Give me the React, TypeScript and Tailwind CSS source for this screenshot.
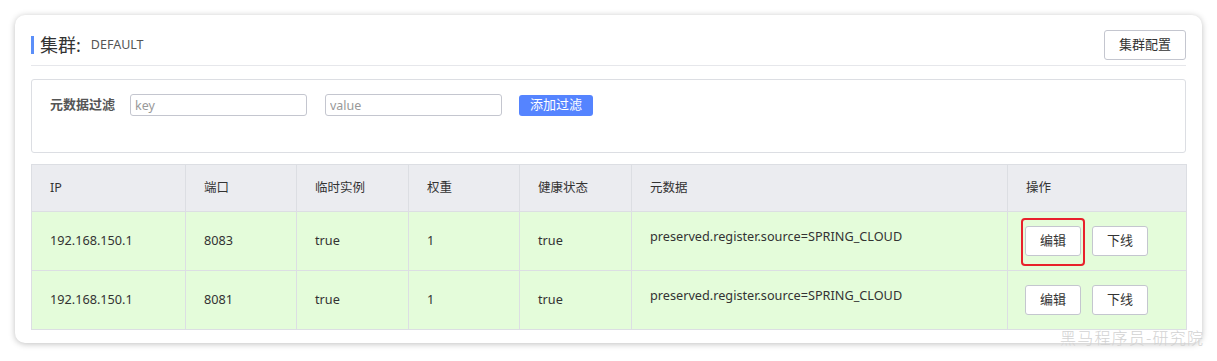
import React from 'react';

type Instance = { ip: string; port: string; ephemeral: string; weight: string; healthy: string; metadata: string };

const instances: Instance[] = [
  { ip: '192.168.150.1', port: '8083', ephemeral: 'true', weight: '1', healthy: 'true', metadata: 'preserved.register.source=SPRING_CLOUD' },
  { ip: '192.168.150.1', port: '8081', ephemeral: 'true', weight: '1', healthy: 'true', metadata: 'preserved.register.source=SPRING_CLOUD' },
];

const font = { fontFamily: '"Noto Sans", "Noto Sans CJK SC", sans-serif' };

const headers = ['IP', '端口', '临时实例', '权重', '健康状态', '元数据', '操作'];

export default function App() {
  return (
    <div className="relative w-[1217px] h-[361px] bg-white text-[#333]" style={font}>
      <div className="absolute left-[15px] top-[15px] w-[1187px] h-[328px] rounded-[10px] bg-white shadow-[0_1px_6px_rgba(0,0,0,0.25)] px-4 pt-[15px]">
        {/* header */}
        <div className="flex items-center justify-between h-[30px]">
          <div className="flex items-center">
            <div className="w-[3px] h-[18px] bg-[#5b8ff9] mr-[6px]" />
            <span className="text-[18px] leading-none text-[#333]">集群:</span>
            <span className="ml-[10px] text-[12.5px] text-[#555]">DEFAULT</span>
          </div>
          <button className="h-[30px] px-[14px] text-[13px] border border-[#c4c6cf] rounded-[3px] bg-white text-[#333]">集群配置</button>
        </div>
        <div className="mt-[5px] border-t border-[#e6e7eb]" />

        {/* filter */}
        <div className="mt-[13px] h-[74px] border border-[#dcdee3] rounded-[3px] px-[18px] pt-[14px]">
          <div className="flex items-center h-[22px]">
            <span className="text-[13px] font-semibold text-[#555] w-[80px]">元数据过滤</span>
            <input placeholder="key" className="w-[177px] h-[22px] border border-[#c4c6cf] rounded-[3px] px-[4px] text-[12.5px] placeholder:text-[#999] outline-none" />
            <input placeholder="value" className="ml-[18px] w-[177px] h-[22px] border border-[#c4c6cf] rounded-[3px] px-[4px] text-[12.5px] placeholder:text-[#999] outline-none" />
            <button className="ml-[17px] h-[21px] w-[74px] rounded-[3px] bg-[#5584ff] text-white text-[13px]">添加过滤</button>
          </div>
        </div>

        {/* table */}
        <table className="mt-[11px] w-[1155px] border-collapse text-[12.7px] table-fixed">
          <colgroup>
            <col className="w-[154px]" />
            <col className="w-[111px]" />
            <col className="w-[112px]" />
            <col className="w-[111px]" />
            <col className="w-[112px]" />
            <col className="w-[376px]" />
            <col className="w-[179px]" />
          </colgroup>
          <thead>
            <tr className="h-[47px] bg-[#ebecf0]">
              {headers.map((h) => (
                <th key={h} className="border border-[#dcdee3] px-[18px] text-left font-normal text-[12.5px] text-[#333]">{h}</th>
              ))}
            </tr>
          </thead>
          <tbody>
            {instances.map((r, i) => (
              <tr key={i} className="h-[59px] bg-[#e4fcda]">
                <td className="border border-[#dcdee3] px-[18px]">{r.ip}</td>
                <td className="border border-[#dcdee3] px-[18px]">{r.port}</td>
                <td className="border border-[#dcdee3] px-[18px]">{r.ephemeral}</td>
                <td className="border border-[#dcdee3] px-[18px]">{r.weight}</td>
                <td className="border border-[#dcdee3] px-[18px]">{r.healthy}</td>
                <td className="border border-[#dcdee3] px-[18px] pb-[9px]">{r.metadata}</td>
                <td className="border border-[#dcdee3] px-[17px]">
                  <div className="relative flex items-center gap-[11px]">
                    <button className="w-[56px] h-[30px] border border-[#c4c6cf] rounded-[3px] bg-white text-[13px] text-[#333]">编辑</button>
                    <button className="w-[56px] h-[30px] border border-[#c4c6cf] rounded-[3px] bg-white text-[13px] text-[#333]">下线</button>
                    {i === 0 && (
                      <div className="absolute left-[-4px] top-[-8px] w-[64px] h-[48px] border-2 border-[#e8212b] rounded-[4px]" />
                    )}
                  </div>
                </td>
              </tr>
            ))}
          </tbody>
        </table>
      </div>

      {/* watermark */}
      <div className="absolute left-[1060px] top-[325px] text-[16px] font-light tracking-[1.2px] text-[#d2d2d2]" style={{ fontFamily: '"Noto Sans CJK SC", sans-serif' }}>
        黑马程序员-研究院
      </div>
    </div>
  );
}
